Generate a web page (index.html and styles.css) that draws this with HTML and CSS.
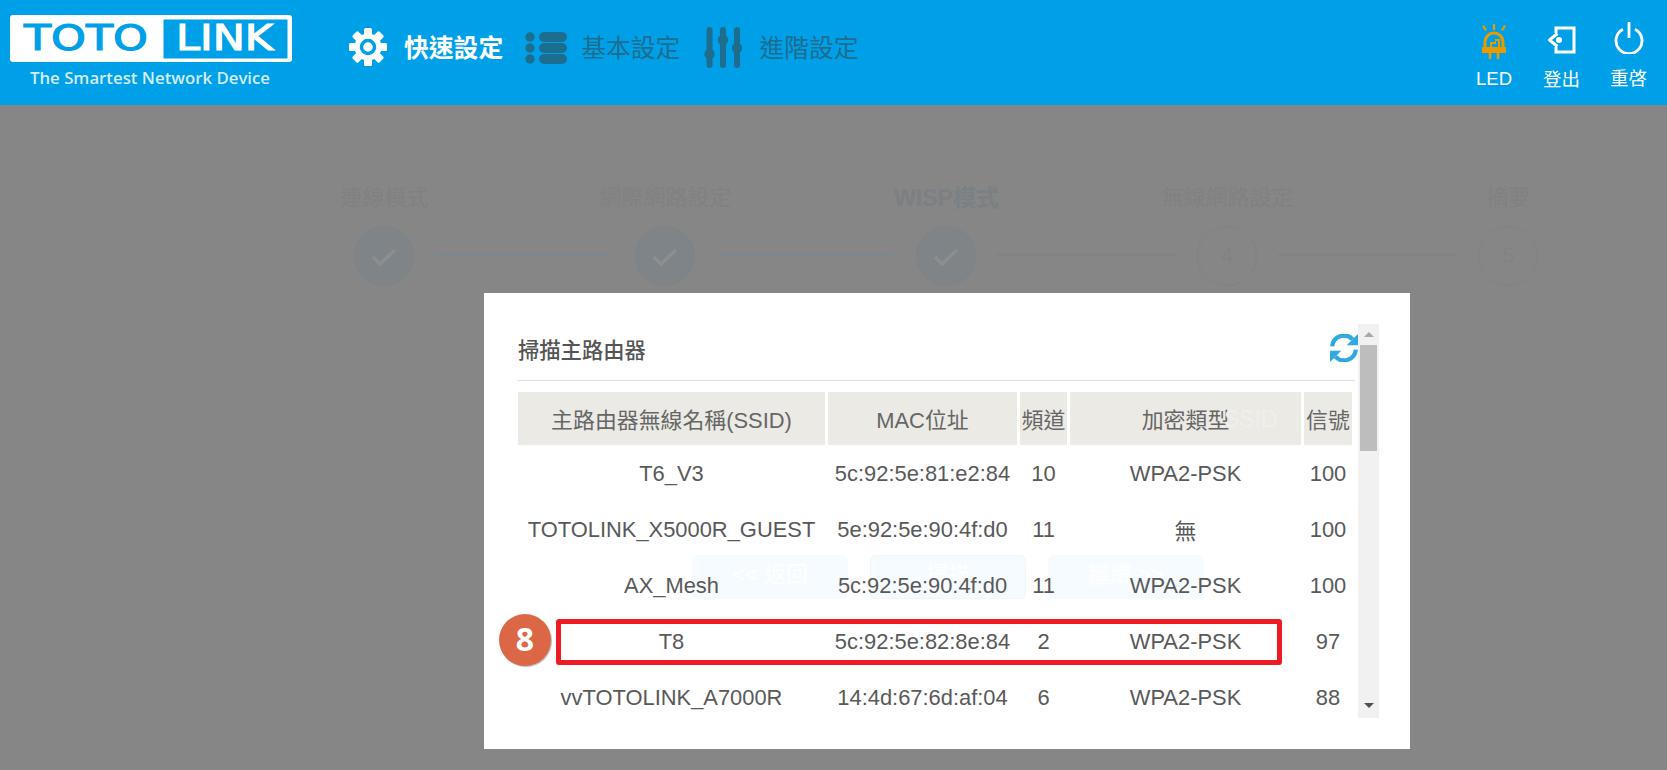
FILE: index.html
```html
<!DOCTYPE html>
<html lang="zh-Hant">
<head>
<meta charset="utf-8">
<title>TOTOLINK</title>
<link rel="stylesheet" href="styles.css">
</head>
<body>
<header class="topbar">
  <div class="brand">
    <svg class="logo" width="284" height="50" viewBox="0 0 284 50">
      <rect x="1" y="1" width="282" height="47" rx="3" fill="#fff"/>
      <text class="logo-word" x="15" y="36" textLength="124" lengthAdjust="spacingAndGlyphs" fill="#00a0e9" stroke="#00a0e9">TOTO</text>
      <rect x="154.500" y="5.500" width="124" height="39" fill="#00a0e9"/>
      <text class="logo-word" x="167" y="36" textLength="97" lengthAdjust="spacingAndGlyphs" fill="#fff" stroke="#fff">LINK</text>
    </svg>
    <div class="tagline">The Smartest Network Device</div>
  </div>
  <nav class="nav">
    <a class="nav-item active">
      <svg class="ico-gear" width="38" height="38" viewBox="0 0 38 38"><g fill="#fff"><circle cx="19" cy="19" r="13.500"/><g id="t"><rect x="15" y="0" width="8" height="8" rx="1.500"/><rect x="15" y="30" width="8" height="8" rx="1.500"/></g><use href="#t" transform="rotate(45 19 19)"/><use href="#t" transform="rotate(90 19 19)"/><use href="#t" transform="rotate(135 19 19)"/></g><circle cx="19" cy="19" r="6.500" fill="none" stroke="#00a0e9" stroke-width="3.500"/></svg>
      <span>快速設定</span>
    </a>
    <a class="nav-item">
      <svg class="ico-list" width="42" height="32" viewBox="0 0 42 32"><g fill="#1d6d8f"><circle cx="5" cy="5" r="4.700"/><circle cx="5" cy="16" r="4.700"/><circle cx="5" cy="27" r="4.700"/><rect x="14" y="0" width="28" height="10" rx="5"/><rect x="14" y="11" width="28" height="10" rx="5"/><rect x="14" y="22" width="28" height="10" rx="5"/></g></svg>
      <span>基本設定</span>
    </a>
    <a class="nav-item">
      <svg class="ico-sliders" width="38" height="41" viewBox="0 0 38 41"><g fill="#1d6d8f"><rect x="2.500" y="0" width="6" height="41" rx="3"/><rect x="16" y="0" width="6" height="41" rx="3"/><rect x="30" y="0" width="6" height="41" rx="3"/><circle cx="5.500" cy="27" r="5.200"/><circle cx="19" cy="13" r="5.200"/><circle cx="33" cy="21" r="5.200"/></g></svg>
      <span>進階設定</span>
    </a>
  </nav>
  <div class="tools">
    <a class="tool tool-led">
      <svg width="30" height="36" viewBox="0 0 30 36"><g fill="none" stroke="#e89a00" stroke-width="2.200"><path d="M15 0v6M4 1.500l3 5M26 1.500l-3 5"/><path d="M6 25V18a9 9 0 0 1 18 0v7" stroke-width="3"/><path d="M11 29v6M19 29v6" stroke-width="2.500"/></g><rect x="3" y="23" width="24" height="6" fill="#e89a00"/><path d="M11 24v-6h5v-3h5v9h-2v-7h-2v3h-4v4z" fill="#e89a00"/></svg>
      <span>LED</span>
    </a>
    <a class="tool tool-out">
      <svg width="32" height="28" viewBox="0 0 32 28"><g fill="none" stroke="#fff" stroke-width="3"><path d="M10 7V2h18v24H10v-5"/><path d="M11.500 7.500 3.500 14l8 6.500" stroke-linejoin="round"/></g><circle cx="13" cy="14" r="3" fill="#fff"/></svg>
      <span>登出</span>
    </a>
    <a class="tool tool-power">
      <svg width="30" height="32" viewBox="0 0 30 32"><g fill="none" stroke="#fff" stroke-width="2.800"><path d="M9 7.200a13 13 0 1 0 12 0"/><path d="M15 0v16"/></g></svg>
      <span>重啓</span>
    </a>
  </div>
</header>

<main class="wizard">
  <div class="step-labels">
    <div class="step-label">連線模式</div>
    <div class="step-label">網際網路設定</div>
    <div class="step-label current">WISP模式</div>
    <div class="step-label">無線網路設定</div>
    <div class="step-label">摘要</div>
  </div>
  <div class="step-track">
    <div class="dot done"><svg class="tick" width="26" height="20" viewBox="0 0 26 20"><path d="M2 9l7 7L24 2" fill="none" stroke="#8c8e8f" stroke-width="3.500"/></svg></div>
    <div class="bar done"></div>
    <div class="dot done"><svg class="tick" width="26" height="20" viewBox="0 0 26 20"><path d="M2 9l7 7L24 2" fill="none" stroke="#8c8e8f" stroke-width="3.500"/></svg></div>
    <div class="bar done"></div>
    <div class="dot done"><svg class="tick" width="26" height="20" viewBox="0 0 26 20"><path d="M2 9l7 7L24 2" fill="none" stroke="#8c8e8f" stroke-width="3.500"/></svg></div>
    <div class="bar"></div>
    <div class="dot">4</div>
    <div class="bar"></div>
    <div class="dot">5</div>
  </div>
</main>

<section class="modal">
  <div class="ghost-ssid">SSID</div>
  <div class="ghost-buttons">
    <span class="ghost-btn">&lt;&lt; 返回</span>
    <span class="ghost-btn outlined">掃描</span>
    <span class="ghost-btn">繼續 &gt;&gt;</span>
  </div>
  <div class="scroll-pane">
    <div class="pane-body">
      <div class="pane-head">
        <h2>掃描主路由器</h2>
        <svg class="refresh" width="28" height="28" viewBox="1 1 26 26"><g fill="none" stroke="#2fa9e0" stroke-width="4"><path d="M3 12.500A11 11 0 0 1 22 6"/><path d="M25 15.500A11 11 0 0 1 6 22"/></g><path d="M27 1v10.500H16.500zM1 27V16.500h10.500z" fill="#2fa9e0"/></svg>
      </div>
      <table class="ap-table">
        <colgroup>
          <col class="c1"><col class="c2"><col class="c3"><col class="c4"><col class="c5">
        </colgroup>
        <thead>
          <tr><th>主路由器無線名稱(SSID)</th><th>MAC位址</th><th>頻道</th><th>加密類型</th><th>信號</th></tr>
        </thead>
        <tbody>
          <tr><td>T6_V3</td><td>5c:92:5e:81:e2:84</td><td>10</td><td>WPA2-PSK</td><td>100</td></tr>
          <tr><td>TOTOLINK_X5000R_GUEST</td><td>5e:92:5e:90:4f:d0</td><td>11</td><td>無</td><td>100</td></tr>
          <tr><td>AX_Mesh</td><td>5c:92:5e:90:4f:d0</td><td>11</td><td>WPA2-PSK</td><td>100</td></tr>
          <tr><td>T8</td><td>5c:92:5e:82:8e:84</td><td>2</td><td>WPA2-PSK</td><td>97</td></tr>
          <tr><td>vvTOTOLINK_A7000R</td><td>14:4d:67:6d:af:04</td><td>6</td><td>WPA2-PSK</td><td>88</td></tr>
        </tbody>
      </table>
    </div>
    <div class="scrollbar">
      <div class="arrow up"></div>
      <div class="thumb"></div>
      <div class="arrow down"></div>
    </div>
  </div>
  <div class="highlight"></div>
  <div class="badge">8</div>
</section>
</body>
</html>
```

FILE: styles.css
```css
* { box-sizing: border-box; }
html, body { margin: 0; height: 100%; }
body {
  width: 1667px;
  height: 770px;
  overflow: hidden;
  background: #868686;
  font-family: "Liberation Sans", "Noto Sans CJK TC", sans-serif;
  position: relative;
}

/* Header */
.topbar {
  height: 105px;
  background: #00a0e9;
  display: flex;
  align-items: flex-start;
}
.brand { margin: 14px 0 0 9px; width: 284px; }
.logo { display: block; }
.logo-word {
  font-family: "DejaVu Sans", sans-serif;
  font-size: 36px;
  font-weight: 400;
  stroke-width: 1.2px;
}
.tagline {
  font-family: "Open Sans", sans-serif;
  font-weight: 600;
  font-size: 16.800px;
  line-height: 20px;
  color: #d2ecfa;
  text-align: center;
  margin-top: 4px;
  width: 284px;
  white-space: nowrap;
  padding-right: 2px;
}
.nav {
  display: flex;
  margin-left: 56px;
  height: 96px;
  align-items: center;
}
.nav-item {
  display: flex;
  align-items: center;
  color: #1d6d8f;
  font-size: 24.800px;
  white-space: nowrap;
}
.nav-item span { line-height: 30px; margin-top: 2px; }
.nav-item.active { color: #fff; font-weight: 700; }
.nav-item.active span { margin-left: 17px; }
.nav-item:nth-child(2) { margin-left: 22px; }
.nav-item:nth-child(2) span { margin-left: 14px; }
.nav-item:nth-child(3) { margin-left: 24px; }
.nav-item:nth-child(3) span { margin-left: 17px; }
.ico-gear { margin-top: -2px; }
.ico-sliders { margin-top: -2px; }

.tools {
  margin-left: auto;
  display: flex;
  padding-right: 20px;
}
.tool {
  display: flex;
  flex-direction: column;
  align-items: center;
  color: #fff;
  font-size: 18.500px;
  line-height: 22px;
}
.tool svg { display: block; }
.tool-led { width: 36px; padding-top: 24px; }
.tool-led span { margin-top: 8px; }
.tool-out { width: 37px; margin-left: 31px; padding-top: 26px; }
.tool-out span { margin-top: 15px; }
.tool-power { width: 37px; margin-left: 30px; padding-top: 22px; }
.tool-power svg { margin-bottom: 14px; }

/* Wizard behind the dialog */
.wizard { padding: 77px 0 0 244px; }
.step-labels {
  display: grid;
  grid-template-columns: repeat(5, 281px);
  height: 32px;
}
.step-label {
  text-align: center;
  font-size: 22px;
  line-height: 32px;
  color: #818181;
}
.step-label.current { color: #7a8084; font-weight: 700; font-size: 23px; }
.step-track {
  display: flex;
  align-items: center;
  margin: 12px 0 0 110px;
  gap: 21px;
}
.dot {
  width: 60px;
  height: 60px;
  border-radius: 50%;
  border: 1px solid #828282;
  display: flex;
  align-items: center;
  justify-content: center;
  color: #808386;
  font-size: 22px;
}
.dot.done { background: #7e8487; border-color: #7e8487; }
.tick { margin-top: 4px; }
.bar { width: 179px; height: 3px; background: #838383; margin-top: -3px; }
.bar.done { background: #7e878c; }

/* Dialog */
.modal {
  position: absolute;
  left: 484px;
  top: 293px;
  width: 926px;
  height: 456px;
  background: #fff;
  padding: 31px 31px 0 31px;
}
.scroll-pane {
  display: flex;
  position: relative;
  height: 394px;
  overflow: hidden;
}
.pane-body { width: 843px; }
.pane-head {
  height: 57px;
  display: flex;
  align-items: center;
  justify-content: space-between;
  border-bottom: 1px solid #dfdfdf;
  margin: 0 3px;
}
.pane-head h2 {
  margin: 0;
  font-size: 21.300px;
  font-weight: 500;
  color: #555;
  line-height: 30px;
  position: relative;
  top: -1px;
}
.refresh { margin-right: -3px; position: relative; top: -4px; }
.ap-table {
  table-layout: fixed;
  border-collapse: separate;
  border-spacing: 3px 0;
  width: 840px;
  margin-top: 11px;
  font-size: 21.900px;
  color: #595959;
  position: relative;
}
.c1 { width: 307px; }
.c2 { width: 189px; }
.c3 { width: 47px; }
.c4 { width: 231px; }
.c5 { width: 48px; }
.ap-table th {
  height: 53px;
  background: rgba(233, 232, 225, .9);
  font-weight: 400;
  color: #666;
  padding: 0;
  text-align: center;
  white-space: nowrap;
}
.ap-table td {
  height: 56px;
  padding: 1px 0 0;
  text-align: center;
  white-space: nowrap;
}
.scrollbar {
  width: 21px;
  background: #f1f1f1;
  display: flex;
  flex-direction: column;
  align-items: center;
  padding: 0 2px;
  position: relative;
}
.thumb {
  width: 17px;
  height: 106px;
  background: #bdbdbd;
  flex: none;
}
.arrow { width: 0; height: 0; border-left: 5px solid transparent; border-right: 5px solid transparent; }
.arrow.up { margin: 8px 0 8px; border-bottom: 5px solid #a8a8a8; }
.arrow.down { margin-top: auto; margin-bottom: 10px; border-top: 5px solid #505050; }

/* Faint controls showing through the dialog */
.ghost-ssid {
  position: absolute;
  left: 740px;
  top: 111px;
  font-size: 23px;
  line-height: 30px;
  color: #f0efeb;
  z-index: 1;
}
.ghost-buttons {
  position: absolute;
  left: 208px;
  top: 262px;
  display: flex;
  gap: 22px;
}
.ghost-btn {
  width: 156px;
  height: 44px;
  border-radius: 6px;
  background: #f5fbfe;
  color: #fff;
  font-size: 22px;
  line-height: 40px;
  text-align: center;
  white-space: nowrap;
}
.ghost-btn.outlined { box-shadow: inset 0 0 0 1px #f1f6f7; }

/* Annotation */
.highlight {
  position: absolute;
  left: 72px;
  top: 326px;
  width: 726px;
  height: 46px;
  border: 5px solid #ed1c24;
  border-radius: 3px;
  z-index: 2;
}
.badge {
  position: absolute;
  left: 15px;
  top: 321px;
  width: 52px;
  height: 52px;
  border-radius: 50%;
  background: #dc6747;
  box-shadow: 1px 1px 1px #bbb;
  color: #fff;
  font-family: "Open Sans", sans-serif;
  font-weight: 700;
  font-size: 32px;
  line-height: 50px;
  text-align: center;
  z-index: 2;
}
```
